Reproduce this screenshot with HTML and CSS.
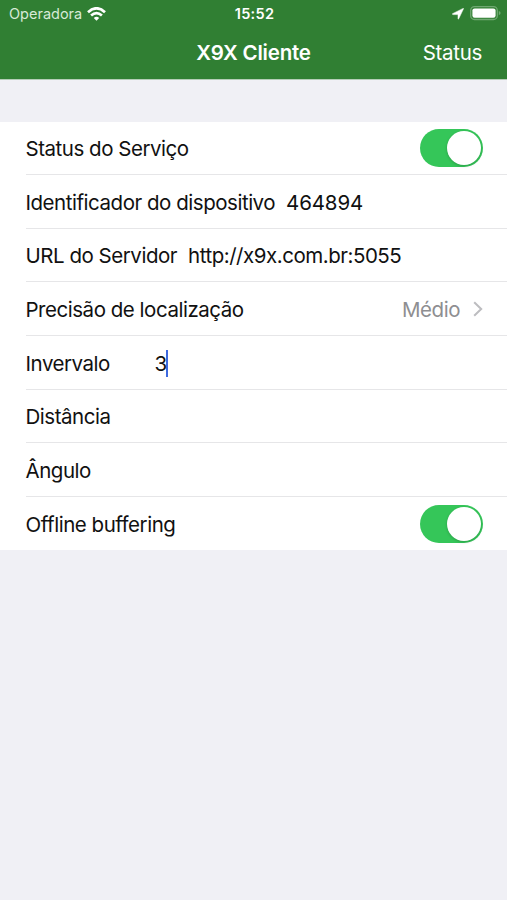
FILE: index.html
```
<!DOCTYPE html>
<html lang="pt-BR">
<head>
    <meta charset="UTF-8">
    <meta name="viewport" content="width=device-width, initial-scale=1.0">
    <title>X9X Cliente</title>
    <link rel="stylesheet" href="styles.css">
</head>
<body>
    <header class="header">
        <div class="status-bar">
            <div class="carrier">
                <span>Operadora</span>
                <svg width="19" height="14" viewBox="0 0 19 14">
                    <g fill="none" stroke="#fff" stroke-width="2.7">
                        <path d="M1 5.2Q9.5 -2.6 18 5.2"/>
                        <path d="M4.1 8.5Q9.5 3.7 14.9 8.5"/>
                    </g>
                    <path d="M6.8 10.9Q9.5 8.6 12.2 10.9L9.5 13.7Z" fill="#fff"/>
                </svg>
            </div>
            <span class="time">15:52</span>
            <div class="indicators">
                <svg width="12" height="12" viewBox="0 0 12 12">
                    <path d="M.5 5.7L11.1.4Q11.8.1 11.5.8L6.7 10.8Q6.2 11.6 6 10.8V6.6H1Q0 6.3.5 5.7Z" fill="#fff" stroke="#fff" stroke-width=".5"/>
                </svg>
                <svg width="31" height="15" viewBox="0 0 31 15">
                    <rect x=".7" y=".7" width="26.6" height="12.8" rx="3.8" fill="none" stroke="#6fa871" stroke-width="1.3"/>
                    <rect x="2.4" y="2.4" width="23.2" height="9.4" rx="2.2" fill="#fff"/>
                    <path d="M28.8 5Q30.6 5.5 30.6 7.1T28.8 9.2Z" fill="#6fa871"/>
                </svg>
            </div>
        </div>
        <nav class="nav-bar">
            <h1 class="title">X9X Cliente</h1>
            <a class="nav-link">Status</a>
        </nav>
    </header>
    <main class="settings">
        <div class="row">
            <span>Status do Serviço</span>
            <span class="switch"></span>
        </div>
        <div class="row">
            <span>Identificador do dispositivo</span>
            <span class="value number">464894</span>
        </div>
        <div class="row">
            <span>URL do Servidor</span>
            <span class="value">http://x9x.com.br:5055</span>
        </div>
        <div class="row">
            <span>Precisão de localização</span>
            <span class="detail">Médio</span>
            <svg class="chevron" width="10" height="16" viewBox="0 0 10 16">
                <path d="M1.2 1.2L8.2 8L1.2 14.8" fill="none" stroke="#bdbdc0" stroke-width="2"/>
            </svg>
        </div>
        <div class="row">
            <span>Invervalo</span>
            <span class="value interval">3</span>
            <span class="caret"></span>
        </div>
        <div class="row">
            <span>Distância</span>
        </div>
        <div class="row">
            <span>Ângulo</span>
        </div>
        <div class="row">
            <span>Offline buffering</span>
            <span class="switch"></span>
        </div>
    </main>
</body>
</html>
```
FILE: styles.css
```
* {
    margin: 0;
    padding: 0;
    box-sizing: border-box;
}
body {
    min-height: 100vh;
    background-color: #f0f0f5;
    color: #111;
    font-family: Inter, "Liberation Sans", sans-serif;
    font-size: 20.5px;
    white-space: nowrap;
}
.header {
    height: 79px;
    margin-bottom: 43px;
    background-color: #307f33;
    box-shadow: 0 1px 0 #b4cdb7;
    color: #fff;
}
.status-bar {
    display: grid;
    grid-template-columns: 1fr auto 1fr;
    align-items: center;
    height: 27px;
    padding: 0 6px 0 8px;
}
.carrier {
    display: flex;
    align-items: center;
    gap: 5px;
    padding-left: 1px;
    color: #d7ead7;
    font-size: 14.5px;
}
.time {
    font-size: 14.5px;
    font-weight: 600;
    letter-spacing: 0.3px;
}
.indicators {
    display: flex;
    justify-content: flex-end;
    align-items: center;
    gap: 6px;
}
.nav-bar {
    display: grid;
    grid-template-columns: 1fr auto 1fr;
    align-items: center;
    height: 51px;
    padding: 0 25px;
}
.title {
    grid-column: 2;
    font-size: 20.5px;
    font-weight: 600;
    letter-spacing: -0.2px;
}
.nav-link {
    justify-self: end;
    letter-spacing: -0.3px;
}
.settings {
    padding-left: 25.5px;
    background-color: #fff;
    letter-spacing: -0.47px;
}
.row {
    display: flex;
    align-items: center;
    height: 53.7px;
    padding-top: 1.5px;
    padding-right: 24px;
    border-bottom: 1px solid #e6e6e8;
}
.row:first-child {
    height: 53px;
    padding-top: 0;
}
.row:last-child {
    height: 53px;
    padding-top: 1px;
    border-bottom: none;
}
.value {
    margin-left: 11px;
}
.number {
    letter-spacing: -0.15px;
}
.interval {
    margin-left: 44.5px;
}
.caret {
    width: 2px;
    height: 27px;
    margin-left: -0.5px;
    background-color: #3d6ae0;
}
.detail {
    margin-left: auto;
    color: #8e8e91;
}
.chevron {
    margin-left: 13px;
}
.switch {
    display: flex;
    justify-content: flex-end;
    width: 63px;
    height: 38px;
    margin-left: auto;
    padding: 2px;
    border-radius: 19px;
    background-color: #35c659;
}
.switch::after {
    content: "";
    width: 34px;
    height: 34px;
    border-radius: 50%;
    background-color: #fff;
    box-shadow: 0 1px 3px rgba(0, 0, 0, 0.2);
}
```
